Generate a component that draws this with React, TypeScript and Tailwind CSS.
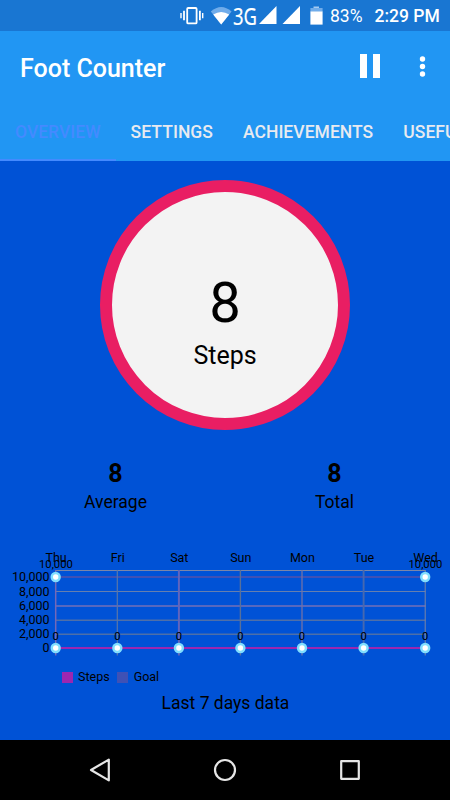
const tabs = ["OVERVIEW", "SETTINGS", "ACHIEVEMENTS", "USEFUL TIPS"];

const days = [
  { label: "Thu", x: 55.7, steps: 0, line: "#7468b8", width: 1.5 },
  { label: "Fri", x: 117.3, steps: 0, line: "#5b76a6", width: 1.2 },
  { label: "Sat", x: 178.9, steps: 0, line: "#6165bd", width: 2 },
  { label: "Sun", x: 240.4, steps: 0, line: "#57709b", width: 1.4 },
  { label: "Mon", x: 302, steps: 0, line: "#7172a8", width: 1.3 },
  { label: "Tue", x: 363.6, steps: 0, line: "#4668b0", width: 1.9 },
  { label: "Wed", x: 425.2, steps: 0, line: "#7c86a6", width: 1 },
];

const yTicks = [
  { label: "10,000", y: 37, line: "#3f51b5", width: 2 },
  { label: "8,000", y: 51.5, line: "#667fae", width: 1 },
  { label: "6,000", y: 66, line: "#5668bf", width: 1.8 },
  { label: "4,000", y: 80.2, line: "#4f6fa8", width: 1.5 },
  { label: "2,000", y: 94.3, line: "#4d6fa8", width: 1.5 },
  { label: "0", y: 108, line: "#9c27b0", width: 2.2 },
];

function Dot({ x, y }: { x: number; y: number }) {
  return (
    <>
      <circle cx={x} cy={y} r={5.2} fill="#80deff" />
      <circle cx={x} cy={y} r={2.7} fill="#fff" />
    </>
  );
}

function StatusBar() {
  return (
    <div className="flex h-[31px] shrink-0 items-center bg-[#1976d2] text-white">
      <svg width="150" height="31" viewBox="0 0 150 31" className="ml-[175px] shrink-0">
        <g fill="none" stroke="#fff">
          <rect x="12.2" y="8" width="9.4" height="15.4" rx="1" strokeWidth="1.8" />
          <path d="M9 10.8v9.4M24.9 10.8v9.4" strokeWidth="1.8" />
          <path d="M6 13v5.2M27.7 13v5.2" strokeWidth="1.4" />
        </g>
        <path d="M46.2 24.4 35.8 11.6Q46.2 2.6 56.6 11.6Z" fill="#70acea" />
        <path d="M46.2 24.4 38.2 14.6Q46.2 9.4 54.2 14.6Z" fill="#fff" />
        <text
          x="58"
          y="24.5"
          textLength="24"
          lengthAdjust="spacingAndGlyphs"
          className="fill-white stroke-white stroke-[0.15] font-['Noto_Sans',sans-serif] text-[23px]"
        >
          3G
        </text>
        <path d="M84 24 101.5 6v18z" fill="#fff" />
        <path d="M107.5 24 125 6v18z" fill="#fff" />
        <path d="M138.5 6.5h5.5v2h-5.5z" fill="#a6cbf1" />
        <path d="M135.4 8h12.2v3.6h-12.2z" fill="#70acea" />
        <path d="M135.4 11.4h12.2V24.6h-12.2z" fill="#fff" />
      </svg>
      <span className="ml-[5px] w-[44.5px] pt-[2px] text-[17.5px] leading-none">83%</span>
      <span className="whitespace-nowrap pt-[2px] text-[17.5px] font-medium leading-none">2:29 PM</span>
    </div>
  );
}

function Header() {
  return (
    <header className="flex h-[130px] shrink-0 flex-col bg-[#2196f3]">
      <div className="flex h-[70px] items-center pt-1 pl-5">
        <h1 className="flex-1 text-[25px] font-medium leading-none text-white">Foot Counter</h1>
        <svg width="100" height="40" viewBox="0 0 100 40" fill="#fff">
          <path d="M10 6h7v24h-7zM23 6h7v24h-7z" />
          <circle cx="72.5" cy="11" r="2.7" />
          <circle cx="72.5" cy="18.5" r="2.7" />
          <circle cx="72.5" cy="26" r="2.7" />
        </svg>
      </div>
      <nav className="flex h-[60px] overflow-hidden">
        {tabs.map((tab, i) => (
          <div
            key={tab}
            className={
              i === 0
                ? "flex shrink-0 items-center border-b-2 border-[#448aff] px-[15px] pt-1 text-[17.5px] font-medium tracking-[0.02px] text-[#448aff]"
                : "flex shrink-0 items-center border-b-2 border-transparent px-[15px] pt-1 text-[17.5px] font-medium tracking-[0.04px] text-[#e8eaf0]"
            }
          >
            {tab}
          </div>
        ))}
      </nav>
    </header>
  );
}

function Stat({ value, label }: { value: number; label: string }) {
  return (
    <div className="flex flex-col items-center">
      <span className="text-[25px] font-bold leading-[30px]">{value}</span>
      <span className="text-[17.5px] leading-[26px]">{label}</span>
    </div>
  );
}

function WeekChart() {
  return (
    <svg width="450" height="120" viewBox="0 0 450 120" className="block shrink-0">
      <path d="M55 30.5H425.5" stroke="#7c86a6" />
      {yTicks.map((t) => (
        <path key={t.label} d={`M55 ${t.y}H425.5`} stroke={t.line} strokeWidth={t.width} />
      ))}
      {days.map((d) => (
        <path key={d.label} d={`M${d.x} 30V115.5`} stroke={d.line} strokeWidth={d.width} />
      ))}
      <path d="M55.7 108H425.2" stroke="#9c27b0" strokeWidth="2.2" />
      <g textAnchor="end" className="text-[12.5px]">
        {yTicks.map((t) => (
          <text key={t.label} x="49.5" y={t.y + 4}>
            {t.label}
          </text>
        ))}
      </g>
      <g textAnchor="middle" className="text-[12.5px]">
        {days.map((d) => (
          <text key={d.label} x={d.x + 0.4} y="22">
            {d.label}
          </text>
        ))}
      </g>
      <Dot x={55.7} y={37} />
      <Dot x={425.2} y={37} />
      <g textAnchor="middle" className="text-[11.25px]">
        <text x="55.9" y="28">10,000</text>
        <text x="425.4" y="28">10,000</text>
        {days.map((d) => (
          <text key={d.label} x={d.x} y="99.6">
            {d.steps}
          </text>
        ))}
      </g>
      {days.map((d) => (
        <Dot key={d.label} x={d.x} y={108} />
      ))}
    </svg>
  );
}

function NavBar() {
  return (
    <div className="flex h-[60px] shrink-0 items-center justify-between bg-black px-[85px]">
      <svg width="30" height="30" viewBox="0 0 30 30" fill="none" stroke="#e6e6e6" strokeWidth="2.2" strokeLinejoin="round">
        <path d="M6 15 23.8 4.6v20.8z" />
      </svg>
      <svg width="30" height="30" viewBox="0 0 30 30" fill="none" stroke="#e6e6e6" strokeWidth="2.2">
        <circle cx="15" cy="15" r="10" />
      </svg>
      <svg width="30" height="30" viewBox="0 0 30 30" fill="none" stroke="#e6e6e6" strokeWidth="2.2" strokeLinejoin="round">
        <path d="M6.2 6.2h17.6v17.6H6.2z" />
      </svg>
    </div>
  );
}

export default function App() {
  return (
    <div className="flex h-[800px] w-[450px] flex-col overflow-hidden bg-[#0052d6] font-[Roboto,sans-serif] text-black">
      <StatusBar />
      <Header />
      <main className="flex flex-1 flex-col">
        <div className="mx-auto mt-[19px] flex size-[250px] shrink-0 flex-col items-center rounded-full border-[12.5px] border-[#e91e63] bg-[#f3f3f3] pt-[78px]">
          <span className="text-[56.25px] leading-[66px]">8</span>
          <span className="text-[25px] leading-[40px]">Steps</span>
        </div>
        <div className="mt-[29px] grid h-[81px] grid-cols-2 px-[6px]">
          <Stat value={8} label="Average" />
          <Stat value={8} label="Total" />
        </div>
        <WeekChart />
        <div className="mt-[9px] ml-[61.5px] flex h-4 items-center text-[12.5px]">
          <span className="mr-[5.5px] size-[11px] bg-[#9c27b0]" />
          Steps
          <span className="mr-[6px] ml-[7px] size-[11px] bg-[#3f51b5]" />
          Goal
        </div>
        <p className="mt-[6px] pl-px text-center text-[17.5px] leading-6">Last 7 days data</p>
      </main>
      <NavBar />
    </div>
  );
}
